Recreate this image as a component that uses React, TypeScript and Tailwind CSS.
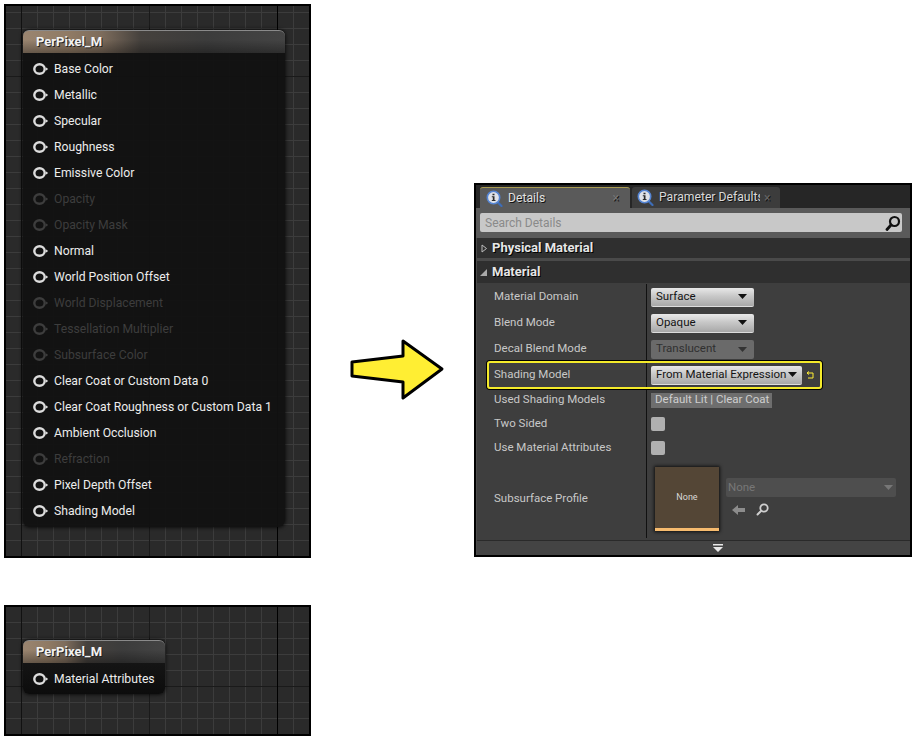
const gridTall =
  'bg-[#2a2a2a] bg-[linear-gradient(90deg,transparent_15px,#111_15px,#111_16px,transparent_16px),linear-gradient(90deg,transparent_143px,#1a1a1a_143px,#1a1a1a_144px,transparent_144px),linear-gradient(90deg,transparent_271px,#000_271px,#000_272px,transparent_272px),linear-gradient(transparent_70px,#1a1a1a_70px,#1a1a1a_71px,transparent_71px),linear-gradient(#3c3c3c_1px,transparent_1px),linear-gradient(90deg,#3c3c3c_1px,transparent_1px)] bg-[size:100%_100%,100%_100%,100%_100%,100%_100%,16px_16px,16px_16px] bg-[position:0_0,0_0,0_0,0_0,0_6px,-1px_0]';

const gridShort =
  'bg-[#2a2a2a] bg-[linear-gradient(90deg,transparent_15px,#111_15px,#111_16px,transparent_16px),linear-gradient(90deg,transparent_143px,#1a1a1a_143px,#1a1a1a_144px,transparent_144px),linear-gradient(90deg,transparent_271px,#000_271px,#000_272px,transparent_272px),linear-gradient(transparent_79px,#1a1a1a_79px,#1a1a1a_80px,transparent_80px),linear-gradient(#3c3c3c_1px,transparent_1px),linear-gradient(90deg,#3c3c3c_1px,transparent_1px)] bg-[size:100%_100%,100%_100%,100%_100%,100%_100%,16px_16px,16px_16px] bg-[position:0_0,0_0,0_0,0_0,0_15px,-1px_0]';

const pins = [
  { name: 'Base Color', on: true },
  { name: 'Metallic', on: true },
  { name: 'Specular', on: true },
  { name: 'Roughness', on: true },
  { name: 'Emissive Color', on: true },
  { name: 'Opacity', on: false },
  { name: 'Opacity Mask', on: false },
  { name: 'Normal', on: true },
  { name: 'World Position Offset', on: true },
  { name: 'World Displacement', on: false },
  { name: 'Tessellation Multiplier', on: false },
  { name: 'Subsurface Color', on: false },
  { name: 'Clear Coat or Custom Data 0', on: true },
  { name: 'Clear Coat Roughness or Custom Data 1', on: true },
  { name: 'Ambient Occlusion', on: true },
  { name: 'Refraction', on: false },
  { name: 'Pixel Depth Offset', on: true },
  { name: 'Shading Model', on: true },
];

const Pin = ({ name, on }: { name: string; on: boolean }) => (
  <div className={`flex items-center h-[26px] pl-[10px] text-[12.2px] ${on ? 'text-[#ececec]' : 'text-[#3d3d3d]'}`}>
    <svg width="16" height="14" viewBox="0 0 16 14" className="mr-[5px]">
      <ellipse cx="6.5" cy="7" rx="5.2" ry="4.8" fill="none" stroke={on ? '#dcdcdc' : '#3d3d3d'} strokeWidth="2.4" />
      <path d="M12.8 5.2 L15.2 7 L12.8 8.8 Z" fill={on ? '#dcdcdc' : '#3d3d3d'} />
    </svg>
    {name}
  </div>
);

const NodeHeader = () => (
  <div className="h-[23px] rounded-t-[6px] border-t border-[#8a8a8a] bg-[linear-gradient(#0000_40%,#0005),linear-gradient(90deg,#9a8570_0%,#8f7a64_18%,#7d6c5c_30%,#45413d_45%,#3c3c3c_70%,#444_100%)] pl-[13px] flex items-center text-[13px] font-bold text-[#f2f2f2] [text-shadow:1px_1px_0_#222]">
    PerPixel_M
  </div>
);

const Caret = ({ color = '#111' }: { color?: string }) => (
  <svg width="9" height="5" viewBox="0 0 9 5">
    <path d="M0 0 H9 L4.5 5 Z" fill={color} />
  </svg>
);

const Combo = ({ label, wide, disabled }: { label: string; wide?: boolean; disabled?: boolean }) => (
  <div
    className={`flex items-center justify-between h-[19px] rounded-[2px] pl-[5px] text-[11.5px] ${wide ? 'w-[151px] pr-[5px]' : 'w-[103px] pr-[7px]'} ${
      disabled
        ? 'bg-[#6a6a6a] text-[#303030]'
        : 'bg-[linear-gradient(#e8e8e8,#c8c8c8_45%,#a8a8a8)] text-[#141414] border-b border-[#ddd]'
    }`}
  >
    <span className="whitespace-nowrap">{label}</span>
    <Caret color={disabled ? '#333' : '#111'} />
  </div>
);

const Check = () => <div className="w-[14px] h-[14px] rounded-[2px] bg-[#b0b0b0]" />;

const InfoIcon = () => (
  <svg width="17" height="17" viewBox="0 0 17 17">
    <path d="M10.5 11 L15.5 16" stroke="#3d6db8" strokeWidth="2.2" strokeLinecap="round" />
    <circle cx="7.5" cy="7.5" r="6.2" fill="#dfe2e8" stroke="#5585d4" strokeWidth="1.6" />
    <path d="M6.5 3.8 H8.5 V5.3 H6.5 Z M5.8 6.3 H8.5 V10 H9.5 V11 H5.8 V10 H6.8 V7.3 H5.8 Z" fill="#2a2a2a" />
  </svg>
);

const Row = ({ label, h, children }: { label: string; h: string; children: React.ReactNode }) => (
  <div className={`flex items-center ${h}`}>
    <div className="w-[169px] pl-[17px] text-[11.5px] text-[#c8c8c8] shrink-0">{label}</div>
    <div className="border-l border-[#111] self-stretch pl-[4px] flex items-center flex-1">{children}</div>
  </div>
);

const Details = () => (
  <div className="w-[438px] h-[374px] bg-black p-[2px] font-['Roboto',sans-serif] flex flex-col">
    <div className="h-[23px] bg-[#262626] flex items-end pl-[4px] gap-[2px] shrink-0">
      <div className="w-[150px] h-[21px] bg-[#5a5a5a] border-t border-[#a89a50] rounded-t-[3px] flex items-center pl-[6px] text-[12.2px] text-[#e0e0e0] [text-shadow:1px_1px_0_#111]">
        <InfoIcon />
        <span className="ml-[5px]">Details</span>
        <span className="ml-auto mr-[11px] text-[#777] text-[12px]">×</span>
      </div>
      <div className="w-[148px] h-[21px] bg-[#3c3c3c] rounded-t-[3px] flex items-center pl-[5px] text-[12.2px] text-[#d8d8d8] [text-shadow:1px_1px_0_#111]">
        <InfoIcon />
        <span className="ml-[5px] w-[101px] overflow-hidden whitespace-nowrap">Parameter Defaults</span>
        <span className="ml-[4px] text-[#666] text-[12px]">×</span>
      </div>
    </div>
    <div className="bg-[#5a5a5a] h-[5px] shrink-0" />
    <div className="bg-[#5a5a5a] pl-[4px] pr-[8px] shrink-0 h-[25px]">
      <div className="h-[19px] rounded-[2px] bg-[#c8c8c8] flex items-center pl-[5px] pr-[1px] justify-between text-[12px] text-[#8a8a8a]">
        Search Details
        <svg width="16" height="16" viewBox="0 0 16 16">
          <circle cx="9.5" cy="6.5" r="4.5" fill="none" stroke="#111" strokeWidth="2.2" />
          <path d="M6 10 L2 14.5" stroke="#111" strokeWidth="2.8" strokeLinecap="round" />
        </svg>
      </div>
    </div>
    <div className="flex-1 bg-[#4a4a4a] pl-[1px] flex flex-col min-h-0">
      <div className="h-[20px] bg-[#2f2f2f] flex items-center pl-[4px] text-[13px] font-bold text-[#e6e6e6] [text-shadow:1px_1px_0_#000] shrink-0">
        <svg width="7" height="9" viewBox="0 0 7 9" className="mr-[4px]">
          <path d="M1 1 L5.5 4.5 L1 8 Z" fill="none" stroke="#bbb" strokeWidth="1" />
        </svg>
        Physical Material
      </div>
      <div className="h-[3px] bg-[#4a4a4a] shrink-0" />
      <div className="h-[22px] bg-[#2f2f2f] flex items-center pl-[3px] text-[13px] font-bold text-[#e6e6e6] [text-shadow:1px_1px_0_#000] shrink-0">
        <svg width="7" height="7" viewBox="0 0 7 7" className="mr-[5px]">
          <path d="M7 0 V7 H0 Z" fill="#aaa" />
        </svg>
        Material
      </div>
      <div className="flex-1 bg-[#3e3e3e] flex flex-col pt-[1px] min-h-0">
        <Row label="Material Domain" h="h-[26px]">
          <Combo label="Surface" />
        </Row>
        <Row label="Blend Mode" h="h-[26px]">
          <Combo label="Opaque" />
        </Row>
        <Row label="Decal Blend Mode" h="h-[26px]">
          <Combo label="Translucent" disabled />
        </Row>
        <div className="relative">
          <Row label="Shading Model" h="h-[26px]">
            <Combo label="From Material Expression" wide />
            <svg width="9" height="9" viewBox="0 0 9 9" className="ml-[4px]">
              <path d="M1 2 H7 V7 H2 M1 2 L3 0.5 M1 2 L3 3.5" fill="none" stroke="#ffee33" strokeWidth="1" />
            </svg>
          </Row>
          <div className="absolute left-[10px] top-[-1px] w-[335px] h-[28px] rounded-[3px] border-2 border-[#f4ea2a] shadow-[0_0_0_1px_#000]" />
        </div>
        <Row label="Used Shading Models" h="h-[24px]">
          <div className="h-[15px] w-[121px] bg-[#6e6e6e] pl-[4px] flex items-center text-[11.5px] whitespace-nowrap text-[#cfcfcf]">
            Default Lit | Clear Coat
          </div>
        </Row>
        <Row label="Two Sided" h="h-[24px]">
          <Check />
        </Row>
        <Row label="Use Material Attributes" h="h-[24px]">
          <Check />
        </Row>
        <Row label="Subsurface Profile" h="h-[78px]">
          <div className="flex items-center pl-[4px] w-full">
            <div className="w-[64px] h-[64px] bg-[#544636] shadow-[0_0_3px_1px_#111] border-b-[3px] border-[#f7bb6e] flex items-center justify-center text-[9px] text-[#d8d8d8]">
              None
            </div>
            <div className="ml-[7px] mb-[4px]">
              <div className="w-[170px] h-[19px] rounded-[2px] bg-[#4e4e4e] flex items-center justify-between pl-[2px] pr-[3px] text-[11.5px] text-[#777]">
                None
                <Caret color="#777" />
              </div>
              <div className="flex items-center gap-[11px] pl-[6px] mt-[6px]">
                <svg width="13" height="12" viewBox="0 0 13 12">
                  <path d="M0 6 L6 1 V4 H13 V8 H6 V11 Z" fill="#8c8c8c" />
                </svg>
                <svg width="13" height="13" viewBox="0 0 13 13">
                  <circle cx="8" cy="5" r="3.7" fill="none" stroke="#cfcfcf" strokeWidth="1.8" />
                  <path d="M5 8 L1.5 11.5" stroke="#cfcfcf" strokeWidth="2" strokeLinecap="round" />
                </svg>
              </div>
            </div>
          </div>
        </Row>
      </div>
      <div className="h-[15px] bg-[#444] border-t border-[#2a2a2a] flex items-center justify-center pl-[49px] shrink-0">
        <svg width="10" height="8" viewBox="0 0 10 8">
          <path d="M0 0 H10 V1.5 H0 Z M0 3 H10 L5 8 Z" fill="#e8e8e8" />
        </svg>
      </div>
    </div>
  </div>
);

const Arrow = () => (
  <svg width="100" height="66" viewBox="0 0 100 66">
    <path d="M6 26 L57 20 V5 L96 33 L57 62 V46 L6 40 Z" fill="#ffee33" stroke="#000" strokeWidth="3" strokeLinejoin="round" />
  </svg>
);

export default function App() {
  return (
    <div className="w-[918px] h-[740px] bg-white flex overflow-hidden font-['Roboto',sans-serif]">
      <div className="ml-[4px] mt-[4px] w-[307px] flex flex-col gap-[47px] shrink-0">
        <div className={`h-[554px] border-2 border-black pt-[24px] pl-[17px] ${gridTall}`}>
          <div className="w-[262px] h-[497px] rounded-[6px] bg-[#111]/95 shadow-[0_0_4px_#000]">
            <NodeHeader />
            <div className="pt-[3px]">
              {pins.map(p => (
                <Pin key={p.name} name={p.name} on={p.on} />
              ))}
            </div>
          </div>
        </div>
        <div className={`h-[131px] border-2 border-black pt-[33px] pl-[17px] ${gridShort}`}>
          <div className="w-[142px] h-[54px] rounded-[6px] bg-[linear-gradient(#1b1b1b,#0c0c0c)] shadow-[0_0_4px_#000]">
            <NodeHeader />
            <div className="pt-[3px]">
              <Pin name="Material Attributes" on />
            </div>
          </div>
        </div>
      </div>
      <div className="ml-[35px] mt-[336px] shrink-0">
        <Arrow />
      </div>
      <div className="ml-[28px] mt-[183px] shrink-0">
        <Details />
      </div>
    </div>
  );
}
